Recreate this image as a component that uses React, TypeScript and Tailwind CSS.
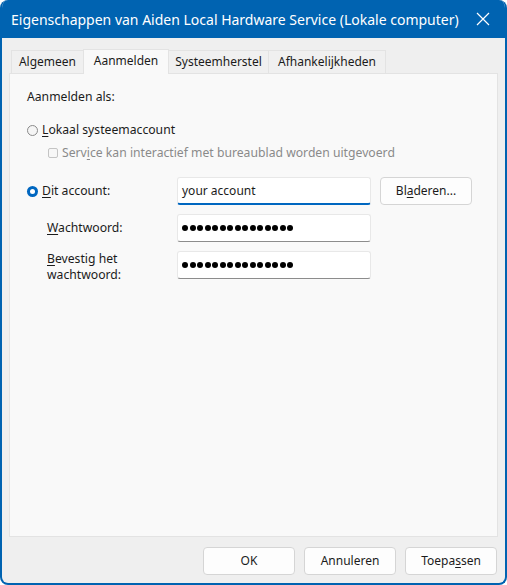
import React from "react";

const font = { fontFamily: '"Segoe UI", "Noto Sans", sans-serif' };

function Radio({ checked }: { checked?: boolean }) {
  return checked ? (
    <span className="flex h-[11px] w-[11px] items-center justify-center rounded-full bg-[#0067c0]">
      <span className="h-[5px] w-[5px] rounded-full bg-white" />
    </span>
  ) : (
    <span className="h-[11px] w-[11px] rounded-full border border-[#8a8a8a] bg-[#f5f5f5]" />
  );
}

function Dots() {
  return (
    <div className="flex gap-[1.5px]">
      {Array.from({ length: 15 }).map((_, i) => (
        <span key={i} className="h-[6px] w-[6px] rounded-full bg-black" />
      ))}
    </div>
  );
}

function Field({ children, focused }: { children: React.ReactNode; focused?: boolean }) {
  return (
    <div
      className={
        "flex h-[28px] w-[194px] items-center rounded-[3px] border border-[#e8e8e8] bg-white px-[4px] " +
        (focused ? "border-b-2 border-b-[#0067c0]" : "border-b-[#8c8c8c]")
      }
    >
      {children}
    </div>
  );
}

function Button({ children, className = "" }: { children: React.ReactNode; className?: string }) {
  return (
    <button
      className={
        "flex h-[28px] items-center justify-center rounded-[4px] border border-[#d5d5d5] bg-[#fdfdfd] text-[12px] text-[#1b1b1b] " +
        className
      }
    >
      {children}
    </button>
  );
}

const tabs = [
  { name: "Algemeen", w: "w-[73px]" },
  { name: "Aanmelden", w: "w-[86px]" },
  { name: "Systeemherstel", w: "w-[101px]" },
  { name: "Afhankelijkheden", w: "w-[118px]" },
];

export default function App() {
  return (
    <div className="h-[585px] w-[507px] bg-white" style={font}>
      <div className="flex h-full w-full flex-col overflow-hidden rounded-t-[8px] rounded-b-[8px] border-x-[2px] border-b-[2px] border-[#0063b1] bg-[#efefef]">
        <div className="flex h-[38px] shrink-0 items-center justify-between bg-[#0063b1] pl-[9px] pr-[14px] text-white">
          <span className="whitespace-nowrap text-[14px]">
            Eigenschappen van Aiden Local Hardware Service (Lokale computer)
          </span>
          <svg width="14" height="14" viewBox="0 0 14 14" className="mr-[1px] shrink-0">
            <path d="M1 1 L13 13 M13 1 L1 13" stroke="white" strokeWidth="1.2" />
          </svg>
        </div>

        <div className="flex flex-1 flex-col px-[7px] pt-[11px]">
          <div className="flex items-end pl-[2px] text-[12px] text-[#1b1b1b]">
            {tabs.map((t, i) => {
              const active = t.name === "Aanmelden";
              return (
                <div
                  key={t.name}
                  className={
                    (active
                      ? "relative z-10 -mb-[1px] h-[25px] bg-[#f9f9f9] pb-[2px] "
                      : "h-[23px] bg-[#f0f0f0] ") +
                    (i > 0 ? "-ml-[1px] " : "") +
                    "flex items-center justify-center border border-b-0 border-[#e3e3e3] " +
                    t.w
                  }
                >
                  {t.name}
                </div>
              );
            })}
          </div>

          <div className="flex h-[464px] flex-col border border-[#e3e3e3] bg-[#f9f9f9] pl-[17px] pt-[15px] text-[12.2px] text-[#1b1b1b]">
            <div className="leading-[16px]">Aanmelden als:</div>

            <div className="mt-[17px] flex items-center gap-[4px] leading-[16px]">
              <Radio />
              <span>
                <u className="underline-offset-2">L</u>okaal systeemaccount
              </span>
            </div>

            <div className="mt-[7px] flex items-center gap-[4px] pl-[21px] leading-[16px] text-[#8a8a8a]">
              <span className="h-[10px] w-[10px] rounded-[2px] border border-[#c4c4c4] bg-[#f7f7f7]" />
              <span>
                Serv<u className="underline-offset-2">i</u>ce kan interactief met bureaublad worden uitgevoerd
              </span>
            </div>

            <div className="mt-[16px] grid grid-cols-[141px_194px_auto] gap-x-[9px] gap-y-[9px]">
              <div className="flex items-center gap-[4px]">
                <Radio checked />
                <span>
                  <u className="underline-offset-2">D</u>it account:
                </span>
              </div>
              <Field focused>
                <span className="text-[12px]">your account</span>
              </Field>
              <Button className="w-[92px]">
                Bl<u className="underline-offset-2">a</u>deren...
              </Button>

              <div className="flex items-center pl-[20px]">
                <span>
                  <u className="underline-offset-2">W</u>achtwoord:
                </span>
              </div>
              <Field>
                <Dots />
              </Field>
              <div />

              <div className="flex items-center pl-[20px] leading-[16px]">
                <span>
                  <u className="underline-offset-2">B</u>evestig het
                  <br />
                  wachtwoord:
                </span>
              </div>
              <Field>
                <Dots />
              </Field>
              <div />
            </div>
          </div>

          <div className="mt-[10px] flex justify-end gap-[9px] pr-[1px]">
            <Button className="w-[92px]">OK</Button>
            <Button className="w-[92px]">Annuleren</Button>
            <Button className="w-[92px]">
              Toepa<u className="underline-offset-2">s</u>sen
            </Button>
          </div>
        </div>
      </div>
    </div>
  );
}
